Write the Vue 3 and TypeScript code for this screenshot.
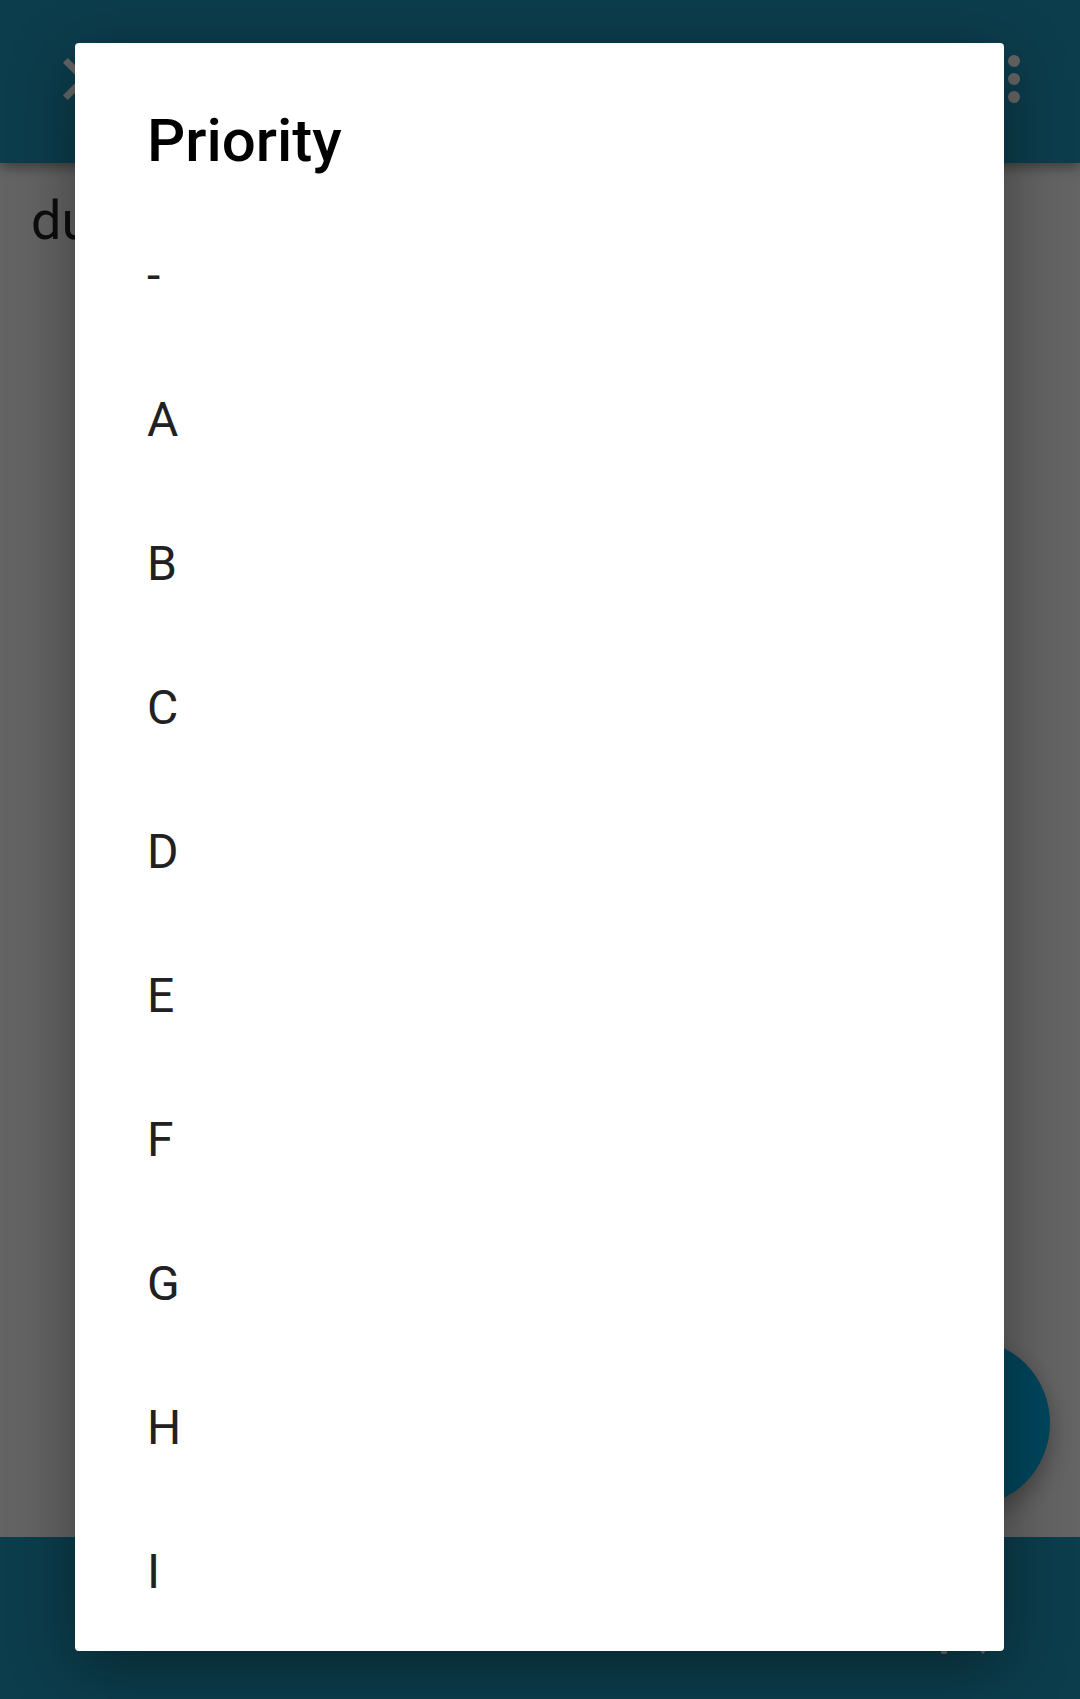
<script setup lang="ts">
import { ref } from 'vue'

const priorities: string[] = ['-', 'A', 'B', 'C', 'D', 'E', 'F', 'G', 'H', 'I']
const selected = ref<string>('-')
const draft = ref<string>('du')
</script>

<template>
  <div class="page">
    <header class="toolbar">
      <button class="icon-button" type="button" aria-label="Close">
        <svg viewBox="0 0 24 24" aria-hidden="true">
          <path d="M5.8 5.8 18.2 18.2M18.2 5.8 5.8 18.2" stroke="currentColor" stroke-width="2.3" />
        </svg>
      </button>
      <button class="icon-button" type="button" aria-label="More options">
        <svg viewBox="0 0 24 24" aria-hidden="true">
          <circle cx="12" cy="6" r="2" />
          <circle cx="12" cy="12" r="2" />
          <circle cx="12" cy="18" r="2" />
        </svg>
      </button>
    </header>

    <main class="editor">
      <textarea v-model="draft" class="task-text" aria-label="Task"></textarea>
      <button class="fab" type="button" aria-label="Save">
        <svg viewBox="0 0 24 24" aria-hidden="true">
          <path d="M9 16.17 4.83 12l-1.42 1.41L9 19 21 7l-1.41-1.41z" />
        </svg>
      </button>
    </main>

    <footer class="bottom-bar">
      <button class="icon-button" type="button" aria-label="Insert">
        <svg viewBox="0 0 72 72" aria-hidden="true">
          <path d="M23 6h6v66h-6zM44 50h6l18 19-3 3z" />
        </svg>
      </button>
    </footer>

    <div class="scrim">
      <section class="dialog" role="dialog" aria-modal="true" aria-labelledby="dialog-title">
        <h1 id="dialog-title" class="title">Priority</h1>
        <ul class="options">
          <li v-for="item in priorities" :key="item">
            <button class="option" type="button" @click="selected = item">{{ item }}</button>
          </li>
        </ul>
      </section>
    </div>
  </div>
</template>

<style>
body {
  margin: 0;
}
</style>

<style scoped>
.page {
  position: relative;
  display: flex;
  flex-direction: column;
  min-height: 100vh;
  background: #fafafa;
  font-family: Roboto, "Liberation Sans", sans-serif;
}

button {
  border: 0;
  padding: 0;
  background: none;
  color: inherit;
  font: inherit;
}

.toolbar {
  position: relative;
  z-index: 1;
  display: flex;
  justify-content: space-between;
  align-items: flex-start;
  box-sizing: border-box;
  height: 163px;
  padding: 43px 30px 0 48px;
  background: #1e99be;
  box-shadow: 0 4px 12px rgba(0, 0, 0, 0.4);
}

.icon-button {
  width: 72px;
  height: 72px;
  color: #fff;
}

svg {
  display: block;
  width: 72px;
  height: 72px;
  fill: currentColor;
}

.editor {
  position: relative;
  display: flex;
  flex: 1;
}

.task-text {
  flex: 1;
  border: 0;
  outline: 0;
  padding: 26px 31px;
  resize: none;
  background: transparent;
  color: #212121;
  font: 54px/64px Roboto, "Liberation Sans", sans-serif;
}

.fab {
  position: absolute;
  right: 30px;
  bottom: 30px;
  display: flex;
  align-items: center;
  justify-content: center;
  width: 168px;
  height: 168px;
  border-radius: 50%;
  background: #00ade6;
  color: #fff;
  box-shadow: 0 10px 24px rgba(0, 0, 0, 0.32);
}

.bottom-bar {
  position: relative;
  display: flex;
  align-items: center;
  justify-content: flex-end;
  height: 162px;
  padding-right: 90px;
  background: #1e99be;
}

.scrim {
  position: absolute;
  inset: 0;
  z-index: 2;
  overflow: hidden;
  box-sizing: border-box;
  padding: 43px 76px 48px 75px;
  background: rgba(0, 0, 0, 0.6);
}

.dialog {
  box-sizing: border-box;
  padding: 58px 0 7px;
  border-radius: 4px;
  background: #fff;
  box-shadow: 0 16px 64px rgba(0, 0, 0, 0.38);
}

.title {
  margin: 0 0 23px;
  padding: 0 72px;
  color: #000;
  font-size: 60px;
  font-weight: 500;
  line-height: 80px;
}

.options {
  margin: 0;
  padding: 0;
  list-style: none;
}

.option {
  display: block;
  width: 100%;
  height: 144px;
  padding: 0 72px;
  color: #212121;
  font-size: 48px;
  line-height: 56px;
  text-align: left;
}
</style>
